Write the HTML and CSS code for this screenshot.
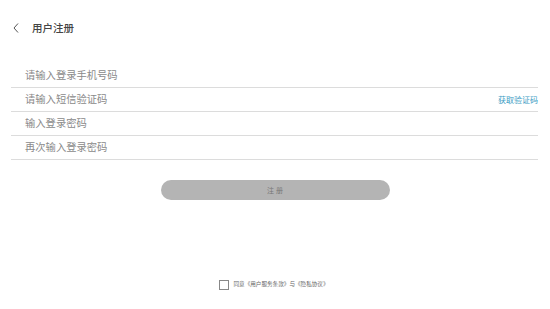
FILE: index.html
```html
<!DOCTYPE html>
<html lang="zh">
<head>
<meta charset="utf-8">
<link rel="stylesheet" href="styles.css">
</head>
<body>
<div class="page">
  <header class="header">
    <svg class="back" width="6" height="10" viewBox="0 0 6 10"><polyline points="5,0.5 1,5 5,9.5" fill="none" stroke="#555" stroke-width="1"/></svg>
    <span class="title">用户注册</span>
  </header>
  <div class="form">
    <div class="row"><span class="ph">请输入登录手机号码</span></div>
    <div class="row"><span class="ph">请输入短信验证码</span><span class="code">获取验证码</span></div>
    <div class="row"><span class="ph">输入登录密码</span></div>
    <div class="row"><span class="ph">再次输入登录密码</span></div>
  </div>
  <div class="btn-wrap"><div class="btn">注册</div></div>
  <div class="agree"><span class="box"></span><span class="agree-text">同意《用户服务条款》与《隐私协议》</span></div>
</div>
</body>
</html>
```
FILE: styles.css
```css
html, body {
  margin: 0;
  padding: 0;
  background: #fff;
}
body {
  font-family: "Noto Sans CJK SC", "Noto Sans", sans-serif;
  width: 550px;
  height: 309px;
  overflow: hidden;
}
.page {
  display: flex;
  flex-direction: column;
  height: 309px;
}
.header {
  height: 56px;
  display: flex;
  align-items: center;
  padding-left: 13px;
  box-sizing: border-box;
}
.back {
  display: block;
}
.title {
  margin-left: 13px;
  font-size: 10.5px;
  font-weight: 500;
  color: #444;
  line-height: 1;
}
.form {
  margin: 8px 12px 0 11px;
}
.row {
  height: 24px;
  border-bottom: 1px solid #dcdcdc;
  box-sizing: border-box;
  display: flex;
  align-items: center;
  justify-content: space-between;
  padding-left: 14px;
}
.ph {
  font-size: 10.3px;
  color: #8a8a8a;
  line-height: 1;
}
.code {
  font-size: 8px;
  color: #3a9cc4;
  line-height: 1;
}
.btn-wrap {
  display: flex;
  justify-content: center;
  margin-top: 20px;
}
.btn {
  width: 229px;
  height: 20px;
  border-radius: 10px;
  background: #b4b4b4;
  color: #777;
  font-size: 7px;
  letter-spacing: 2px;
  display: flex;
  align-items: center;
  justify-content: center;
  padding-left: 2px;
  box-sizing: border-box;
}
.agree {
  margin-top: auto;
  margin-bottom: 19px;
  display: flex;
  align-items: center;
  justify-content: center;
  padding-right: 2px;
}
.box {
  width: 8px;
  height: 8px;
  border: 1px solid #888;
}
.agree-text {
  margin-left: 4px;
  font-size: 5.6px;
  color: #666;
  line-height: 1;
}
```
